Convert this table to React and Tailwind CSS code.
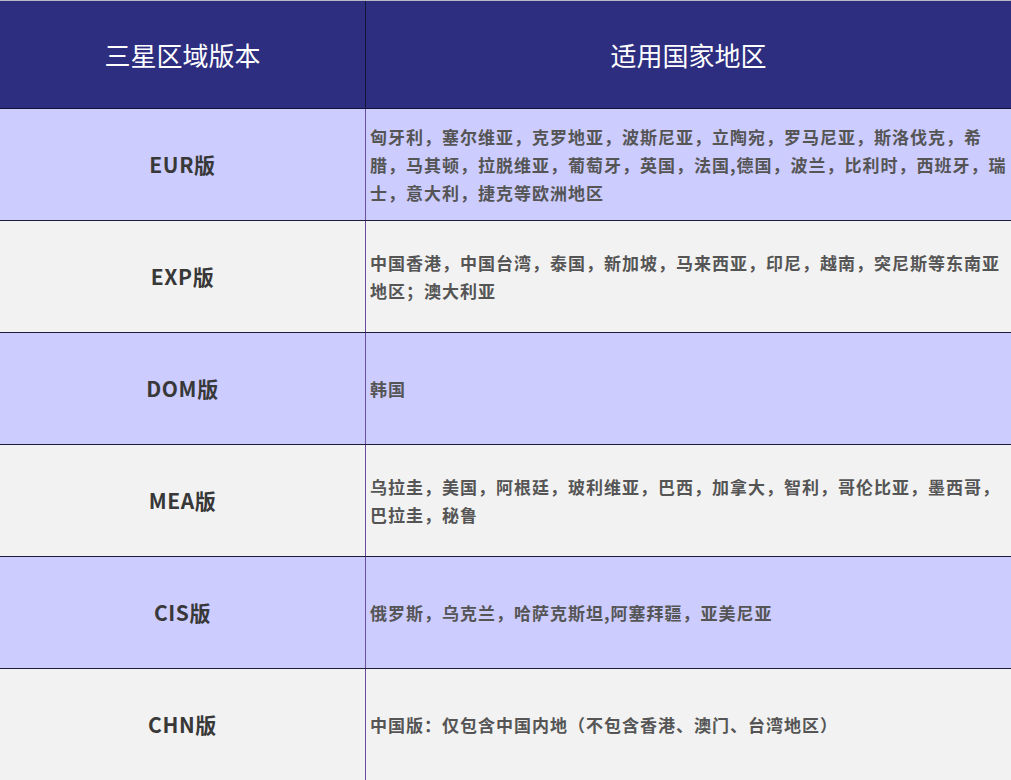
import React from 'react';

const rows = [
    {
        code: 'EUR版',
        text: '匈牙利，塞尔维亚，克罗地亚，波斯尼亚，立陶宛，罗马尼亚，斯洛伐克，希腊，马其顿，拉脱维亚，葡萄牙，英国，法国,德国，波兰，比利时，西班牙，瑞士，意大利，捷克等欧洲地区',
        bg: 'bg-[#ccccff]',
    },
    {
        code: 'EXP版',
        text: '中国香港，中国台湾，泰国，新加坡，马来西亚，印尼，越南，突尼斯等东南亚地区；澳大利亚',
        bg: 'bg-[#f2f2f2]',
    },
    { code: 'DOM版', text: '韩国', bg: 'bg-[#ccccff]' },
    {
        code: 'MEA版',
        text: '乌拉圭，美国，阿根廷，玻利维亚，巴西，加拿大，智利，哥伦比亚，墨西哥，巴拉圭，秘鲁',
        bg: 'bg-[#f2f2f2]',
    },
    { code: 'CIS版', text: '俄罗斯，乌克兰，哈萨克斯坦,阿塞拜疆，亚美尼亚', bg: 'bg-[#ccccff]' },
    { code: 'CHN版', text: '中国版：仅包含中国内地（不包含香港、澳门、台湾地区）', bg: 'bg-[#f2f2f2]' },
];

export default function App() {
    return (
        <div className="w-[1011px] h-[780px] overflow-hidden bg-white font-['Noto_Sans_CJK_SC','Noto_Sans',sans-serif]">
            {/* Header */}
            <div className="flex h-[109px] bg-[#2d2e80] border-t border-[#b8b8c8] border-b border-b-[#14143a]">
                <div className="w-[366px] shrink-0 border-r border-[#14143a] flex items-center justify-center text-white text-[26px]">
                    三星区域版本
                </div>
                <div className="flex-1 flex items-center justify-center text-white text-[26px]">
                    适用国家地区
                </div>
            </div>

            {/* Body rows */}
            {rows.map((row, i) => (
                <div
                    key={row.code}
                    className={`flex ${row.bg} ${i < rows.length - 1 ? 'h-[112px] border-b border-[#1e1e3a]' : 'h-[111px]'}`}
                >
                    <div className="w-[366px] shrink-0 border-r border-[#6a4fa0] flex items-center justify-center text-[21px] tracking-[0.6px] font-bold text-[#383838]">
                        {row.code}
                    </div>
                    <div className="flex-1 flex items-center pl-[4px] text-[17px] leading-[28px] tracking-[1px] font-semibold text-[#555555]">
                        <p>{row.text}</p>
                    </div>
                </div>
            ))}
        </div>
    );
}
